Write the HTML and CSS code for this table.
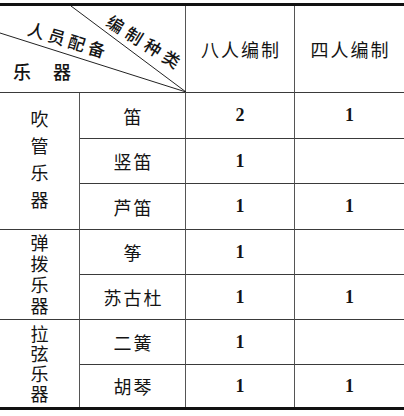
FILE: index.html
```html
<!DOCTYPE html>
<html lang="zh">
<head>
<meta charset="utf-8">
<title>乐器编制</title>
<link rel="stylesheet" href="styles.css">
</head>
<body>
<div class="table">
  <div class="cell diag">
    <svg class="diag-lines" width="186" height="86" viewBox="0 0 186 86">
      <line x1="71" y1="0" x2="186" y2="86" stroke="#222" stroke-width="1"/>
      <line x1="0" y1="27" x2="186" y2="86" stroke="#222" stroke-width="1"/>
    </svg>
    <span class="lbl lbl-type">编制种类</span>
    <span class="lbl lbl-staff">人员配备</span>
    <span class="lbl lbl-inst">乐<span class="gap"></span>器</span>
  </div>
  <div class="cell head r">八人编制</div>
  <div class="cell head">四人编制</div>

  <div class="cell cat g1 r"><span class="vt">吹管乐器</span></div>
  <div class="cell inst r">笛</div>
  <div class="cell num r">2</div>
  <div class="cell num">1</div>
  <div class="cell inst r">竖笛</div>
  <div class="cell num r">1</div>
  <div class="cell num"></div>
  <div class="cell inst r">芦笛</div>
  <div class="cell num r">1</div>
  <div class="cell num">1</div>

  <div class="cell cat g2 r"><span class="vt">弹拨乐器</span></div>
  <div class="cell inst r">筝</div>
  <div class="cell num r">1</div>
  <div class="cell num"></div>
  <div class="cell inst r">苏古杜</div>
  <div class="cell num r">1</div>
  <div class="cell num">1</div>

  <div class="cell cat g3 r last"><span class="vt">拉弦乐器</span></div>
  <div class="cell inst r">二簧</div>
  <div class="cell num r">1</div>
  <div class="cell num"></div>
  <div class="cell inst r last">胡琴</div>
  <div class="cell num r last">1</div>
  <div class="cell num last">1</div>
</div>
</body>
</html>
```
FILE: styles.css
```css
html, body {
  margin: 0;
  padding: 0;
  background: #fff;
}
body {
  width: 404px;
  height: 416px;
  overflow: hidden;
  color: #141414;
  font-family: "Noto Sans CJK SC", "Noto Sans", sans-serif;
}
.table {
  margin-top: 3px;
  display: grid;
  grid-template-columns: 80px 106px 109px 109px;
  grid-template-rows: 87px 46px 45px 46px 45px 45px 45px 42px;
  border-top: 3px solid #111;
  border-bottom: 3px solid #111;
}
.cell {
  box-sizing: border-box;
  border-bottom: 1px solid #3a3a3a;
  display: flex;
  align-items: center;
  justify-content: center;
}
.cell.r {
  border-right: 1px solid #555;
}
.cell.last {
  border-bottom: none;
}
.diag {
  grid-column: 1 / 3;
  border-right: 1px solid #555;
  position: relative;
  display: block;
}
.diag-lines {
  position: absolute;
  left: 0;
  top: 0;
}
.lbl {
  position: absolute;
  font-size: 17px;
  line-height: 1;
  white-space: nowrap;
  font-weight: 500;
}
.lbl-type {
  left: 144px;
  top: 35px;
  letter-spacing: 5px;
  padding-left: 5px;
  transform: translate(-50%, -50%) rotate(32deg);
}
.lbl-staff {
  left: 67px;
  top: 33px;
  letter-spacing: 4px;
  padding-left: 4px;
  transform: translate(-50%, -50%) rotate(17deg);
}
.lbl-inst {
  left: 13px;
  top: 56px;
  font-size: 18px;
}
.gap {
  display: inline-block;
  width: 22px;
}
.head {
  font-size: 18px;
  letter-spacing: 2px;
  padding-left: 2px;
}
.cat {
  grid-row: span 3;
  font-size: 18px;
}
.vt {
  writing-mode: vertical-rl;
  text-orientation: upright;
  line-height: 1;
}
.g1 .vt {
  letter-spacing: 9px;
  padding-top: 6px;
}
.g2 {
  grid-row: span 2;
}
.g2 .vt {
  letter-spacing: 3px;
  padding-top: 3px;
}
.g3 {
  grid-row: span 2;
}
.g3 .vt {
  letter-spacing: 2px;
  padding-top: 2px;
}
.inst {
  font-size: 18px;
  letter-spacing: 2px;
  padding-left: 2px;
}
.num {
  font-family: "Liberation Serif", "DejaVu Serif", serif;
  font-weight: bold;
  font-size: 18px;
}
```
